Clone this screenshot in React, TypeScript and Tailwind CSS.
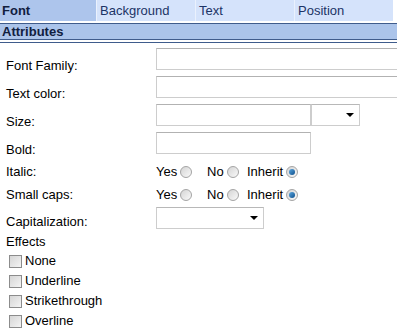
const Radio = ({ checked = false }: { checked?: boolean }) => (
	<span className="ml-[3px] flex h-[12px] w-[12px] items-center justify-center rounded-full border border-[#a4a4a4] bg-gradient-to-br from-[#d4d4d4] to-[#fafafa]">
		{checked && (
			<span className="h-[6px] w-[6px] rounded-full bg-gradient-to-br from-[#5aa8e0] to-[#0b4f8c]" />
		)}
	</span>
);

const Check = () => (
	<span className="h-[13px] w-[13px] border border-[#8c8c8c] bg-gradient-to-br from-[#d6d6d6] to-[#f4f4f4]" />
);

const Arrow = () => (
	<span className="h-0 w-0 border-x-[4px] border-t-[4px] border-x-transparent border-t-black" />
);

const Input = ({ width }: { width: string }) => (
	<div
		className={`h-[22px] ${width} shrink-0 border border-[#cdcdcd] border-t-[#b2b2b2] bg-white`}
	/>
);

const Select = ({ width }: { width: string }) => (
	<div
		className={`flex h-[22px] ${width} shrink-0 items-center justify-end border border-[#cdcdcd] border-t-[#b8b8b8] bg-white pr-[5px]`}
	>
		<Arrow />
	</div>
);

const Label = ({ children, top = "pt-[10px]" }: { children: string; top?: string }) => (
	<div className={`w-[156px] shrink-0 pl-[6px] ${top} leading-[15px]`}>{children}</div>
);

const RadioRow = ({ label }: { label: string }) => (
	<div className="flex h-[23px] items-center">
		<div className="w-[156px] shrink-0 pl-[6px] leading-[15px]">{label}</div>
		<div className="flex w-[51px] items-center">
			Yes
			<Radio />
		</div>
		<div className="flex w-[40px] items-center">
			No
			<Radio />
		</div>
		<div className="flex items-center">
			Inherit
			<Radio checked />
		</div>
	</div>
);

export default function App() {
	const tabs = ["Background", "Text", "Position"];
	const effects = ["None", "Underline", "Strikethrough", "Overline"];
	return (
		<div className="h-[336px] w-[397px] overflow-hidden bg-white font-['Liberation_Sans',Arial,sans-serif] text-[13px] text-black">
			{/* Tabs */}
			<div className="flex h-[21px] text-[#1c3466]">
				<div className="flex w-[96px] items-center bg-[#adc5ec] pl-[2px] font-bold text-[#11203f]">
					Font
				</div>
				{tabs.map((tab) => (
					<div
						key={tab}
						className="flex w-[99px] items-center border-l border-[#eaf1fd] bg-[#d5e3fb] pl-[3px]"
					>
						{tab}
					</div>
				))}
			</div>

			{/* Section header */}
			<div className="mt-[2px] flex h-[17px] items-center border-y border-[#3f5c8c] bg-[#abc4ea] pl-[2px] font-bold text-[#11203f]">
				Attributes
			</div>
			<div className="mt-[2px] h-px bg-[#3f5c8c]" />

			{/* Form */}
			<div className="pt-[5px]">
				<div className="flex h-[28px]">
					<Label>Font Family:</Label>
					<Input width="w-[260px]" />
				</div>
				<div className="flex h-[28px]">
					<Label>Text color:</Label>
					<Input width="w-[260px]" />
				</div>
				<div className="flex h-[28px]">
					<Label>Size:</Label>
					<Input width="w-[155px]" />
					<Select width="w-[49px]" />
				</div>
				<div className="flex h-[28px]">
					<Label>Bold:</Label>
					<Input width="w-[155px]" />
				</div>

				<RadioRow label="Italic:" />
				<RadioRow label="Small caps:" />

				<div className="flex h-[28px] pt-px">
					<Label top="pt-[7px]">Capitalization:</Label>
					<Select width="w-[108px]" />
				</div>

				<div className="pl-[6px] leading-[16px]">Effects</div>
				<div className="pt-[1px]">
					{effects.map((e) => (
						<div key={e} className="flex h-[20px] items-center pl-[9px]">
							<Check />
							<span className="ml-[3px]">{e}</span>
						</div>
					))}
				</div>
			</div>
		</div>
	);
}
